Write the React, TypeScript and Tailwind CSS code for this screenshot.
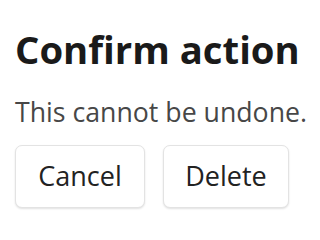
export default function App() {
  return (
    <div className="w-[320px] h-[240px] bg-white pl-[15px] pt-[26px] font-['Open_Sans',sans-serif]">
      <h1 className="text-[38.3px] leading-[46px] font-bold text-[#1a1a1a]">Confirm action</h1>
      <p className="mt-[23px] text-[26.7px] leading-[34px] text-[#474747]">This cannot be undone.</p>
      <div className="mt-[16px] flex gap-[18px]">
        <button className="w-[130px] h-[63px] rounded-[7px] border border-[#e3e3e3] bg-white text-[27px] text-[#222] shadow-[0_1px_2px_rgba(0,0,0,0.12)]">
          Cancel
        </button>
        <button className="w-[126px] h-[63px] rounded-[7px] border border-[#e3e3e3] bg-white text-[27px] text-[#222] shadow-[0_1px_2px_rgba(0,0,0,0.12)]">
          Delete
        </button>
      </div>
    </div>
  );
}
